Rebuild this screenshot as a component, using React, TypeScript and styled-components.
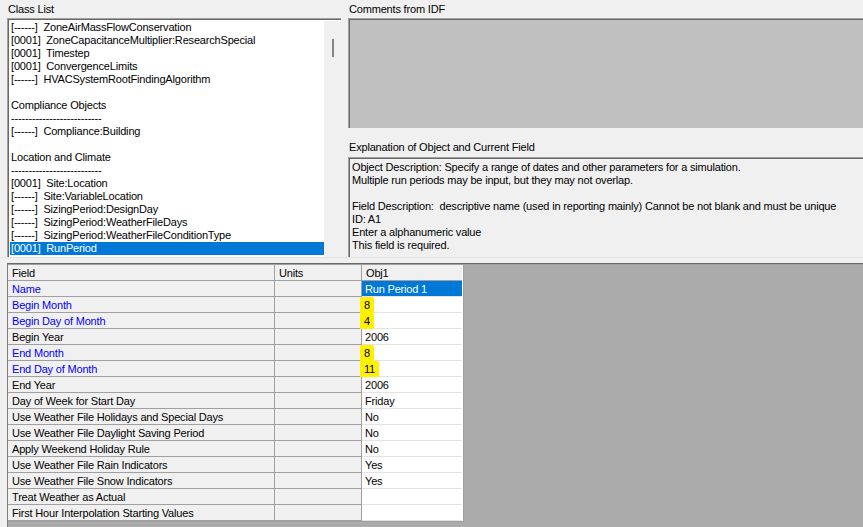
import React, { FC } from 'react';
import styled, { createGlobalStyle } from 'styled-components';

const GlobalStyle = createGlobalStyle`
  html, body {
    margin: 0;
    padding: 0;
    background: #f0f0f0;
  }
`;

const Window = styled.div`
  width: 863px;
  height: 527px;
  overflow: hidden;
  background: #f0f0f0;
  font-family: 'Liberation Sans', Arial, sans-serif;
  font-size: 11px;
  letter-spacing: -0.18px;
  color: #000;
  display: flex;
  flex-direction: column;
`;

const TopPane = styled.div`
  display: grid;
  grid-template-columns: 334px 1fr;
  column-gap: 7px;
  padding-left: 7px;
  height: 257px;
`;

const Column = styled.div`
  display: flex;
  flex-direction: column;
  min-width: 0;
`;

const Label = styled.div<{ $top?: number; $height?: number }>`
  height: ${({ $height }) => $height ?? 18}px;
  line-height: 13px;
  padding-top: ${({ $top }) => $top ?? 3}px;
  box-sizing: border-box;
  padding-left: 1px;
  white-space: nowrap;
`;

const Sunken = styled.div`
  border-top: 1px solid #a0a0a0;
  border-left: 1px solid #a0a0a0;
  box-shadow: inset 1px 1px 0 #696969;
  box-sizing: border-box;
`;

const ListBox = styled(Sunken)`
  flex: 1;
  display: flex;
  background: #fff;
  padding: 2px 0 0 2px;
  overflow: hidden;
`;

const ListItems = styled.div`
  flex: 1;
  display: flex;
  flex-direction: column;
`;

const ListItem = styled.div<{ $selected?: boolean }>`
  height: 13px;
  line-height: 13px;
  padding-left: 1px;
  white-space: pre;
  background: ${({ $selected }) => ($selected ? '#0078d7' : 'transparent')};
  color: ${({ $selected }) => ($selected ? '#fff' : '#000')};
`;

const ScrollTrack = styled.div`
  width: 17px;
  background: #f0f0f0;
  display: flex;
  justify-content: center;
  padding-top: 18px;
  box-sizing: border-box;
`;

const ScrollThumb = styled.div`
  width: 2px;
  height: 18px;
  background: #858585;
`;

const CommentsBox = styled(Sunken)`
  height: 110px;
  background: #c0c0c0;
`;

const ExplanationBox = styled(Sunken)`
  flex: 1;
  background: #f0f0f0;
  padding: 3px 0 0 3px;
  line-height: 13px;
  white-space: pre;
  overflow: hidden;
`;

const Splitter = styled.div`
  height: 6px;
  border-top: 1px solid #e3e3e3;
  box-sizing: border-box;
`;

const GridArea = styled.div`
  flex: 1;
  margin-left: 7px;
  background: #ababab;
  border-top: 1px solid #696969;
  border-left: 1px solid #808080;
  box-shadow: inset 0 1px 0 #a0a0a0;
  padding-top: 1px;
  overflow: hidden;
`;

const Table = styled.div`
  display: grid;
  grid-template-columns: 267px 87px 100px;
  width: 455px;
  border-right: 1px solid #a0a0a0;
  border-bottom: 1px solid #a0a0a0;
  background: #fff;
`;

const Cell = styled.div<{ $kind: 'field' | 'units' | 'value'; $blue?: boolean; $selected?: boolean }>`
  height: 16px;
  line-height: 16px;
  box-sizing: border-box;
  padding-left: ${({ $kind }) => ($kind === 'value' ? 3 : 4)}px;
  white-space: nowrap;
  background: ${({ $kind, $selected }) => {
    if ($selected) return '#0078d7';
    return $kind === 'value' ? '#fff' : '#f0f0f0';
  }};
  color: ${({ $blue, $selected }) => {
    if ($selected) return '#fff';
    return $blue ? '#0000ff' : '#000';
  }};
  border-bottom: 1px solid ${({ $kind }) => ($kind === 'value' ? '#e3e3e3' : '#a0a0a0')};
  border-right: ${({ $kind }) => ($kind === 'value' ? 'none' : '1px solid #a0a0a0')};
`;

const HeaderCell = styled.div<{ $last?: boolean }>`
  height: 16px;
  line-height: 16px;
  box-sizing: border-box;
  padding-left: 4px;
  background: #f0f0f0;
  border-bottom: 1px solid #a0a0a0;
  border-right: ${({ $last }) => ($last ? 'none' : '1px solid #a0a0a0')};
`;

const Marker = styled.span`
  display: inline-block;
  background: #ffef00;
  margin-left: -5px;
  padding: 0 4px 0 4px;
  height: 16px;
  border-radius: 2px;
  box-shadow: 0 1px 0 #ffef00;
`;

const listItems = [
  '[------]  ZoneAirMassFlowConservation',
  '[0001]  ZoneCapacitanceMultiplier:ResearchSpecial',
  '[0001]  Timestep',
  '[0001]  ConvergenceLimits',
  '[------]  HVACSystemRootFindingAlgorithm',
  '',
  'Compliance Objects',
  '--------------------------',
  '[------]  Compliance:Building',
  '',
  'Location and Climate',
  '--------------------------',
  '[0001]  Site:Location',
  '[------]  Site:VariableLocation',
  '[------]  SizingPeriod:DesignDay',
  '[------]  SizingPeriod:WeatherFileDays',
  '[------]  SizingPeriod:WeatherFileConditionType',
  '[0001]  RunPeriod',
];

const explanation = [
  'Object Description: Specify a range of dates and other parameters for a simulation.',
  'Multiple run periods may be input, but they may not overlap.',
  '',
  'Field Description:  descriptive name (used in reporting mainly) Cannot be not blank and must be unique',
  'ID: A1',
  'Enter a alphanumeric value',
  'This field is required.',
];

type Row = { field: string; value: string; required?: boolean; marked?: boolean };

const rows: Row[] = [
  { field: 'Name', value: 'Run Period 1', required: true },
  { field: 'Begin Month', value: '8', required: true, marked: true },
  { field: 'Begin Day of Month', value: '4', required: true, marked: true },
  { field: 'Begin Year', value: '2006' },
  { field: 'End Month', value: '8', required: true, marked: true },
  { field: 'End Day of Month', value: '11', required: true, marked: true },
  { field: 'End Year', value: '2006' },
  { field: 'Day of Week for Start Day', value: 'Friday' },
  { field: 'Use Weather File Holidays and Special Days', value: 'No' },
  { field: 'Use Weather File Daylight Saving Period', value: 'No' },
  { field: 'Apply Weekend Holiday Rule', value: 'No' },
  { field: 'Use Weather File Rain Indicators', value: 'Yes' },
  { field: 'Use Weather File Snow Indicators', value: 'Yes' },
  { field: 'Treat Weather as Actual', value: '' },
  { field: 'First Hour Interpolation Starting Values', value: '' },
];

const App: FC = () => (
  <>
    <GlobalStyle />
    <Window>
      <TopPane>
        <Column>
          <Label>Class List</Label>
          <ListBox>
            <ListItems>
              {listItems.map((item, i) => (
                <ListItem key={i} $selected={i === listItems.length - 1}>
                  {item || ' '}
                </ListItem>
              ))}
            </ListItems>
            <ScrollTrack>
              <ScrollThumb />
            </ScrollTrack>
          </ListBox>
        </Column>
        <Column>
          <Label>Comments from IDF</Label>
          <CommentsBox />
          <Label $top={13} $height={29}>
            Explanation of Object and Current Field
          </Label>
          <ExplanationBox>
            {explanation.map((line, i) => (
              <div key={i}>{line || ' '}</div>
            ))}
          </ExplanationBox>
        </Column>
      </TopPane>
      <Splitter />
      <GridArea>
        <Table>
          <HeaderCell>Field</HeaderCell>
          <HeaderCell>Units</HeaderCell>
          <HeaderCell $last>Obj1</HeaderCell>
          {rows.map((row, i) => (
            <React.Fragment key={row.field}>
              <Cell $kind="field" $blue={row.required}>{row.field}</Cell>
              <Cell $kind="units" />
              <Cell $kind="value" $selected={i === 0}>
                {row.marked ? <Marker>{row.value}</Marker> : row.value}
              </Cell>
            </React.Fragment>
          ))}
        </Table>
      </GridArea>
    </Window>
  </>
);

export default App;
